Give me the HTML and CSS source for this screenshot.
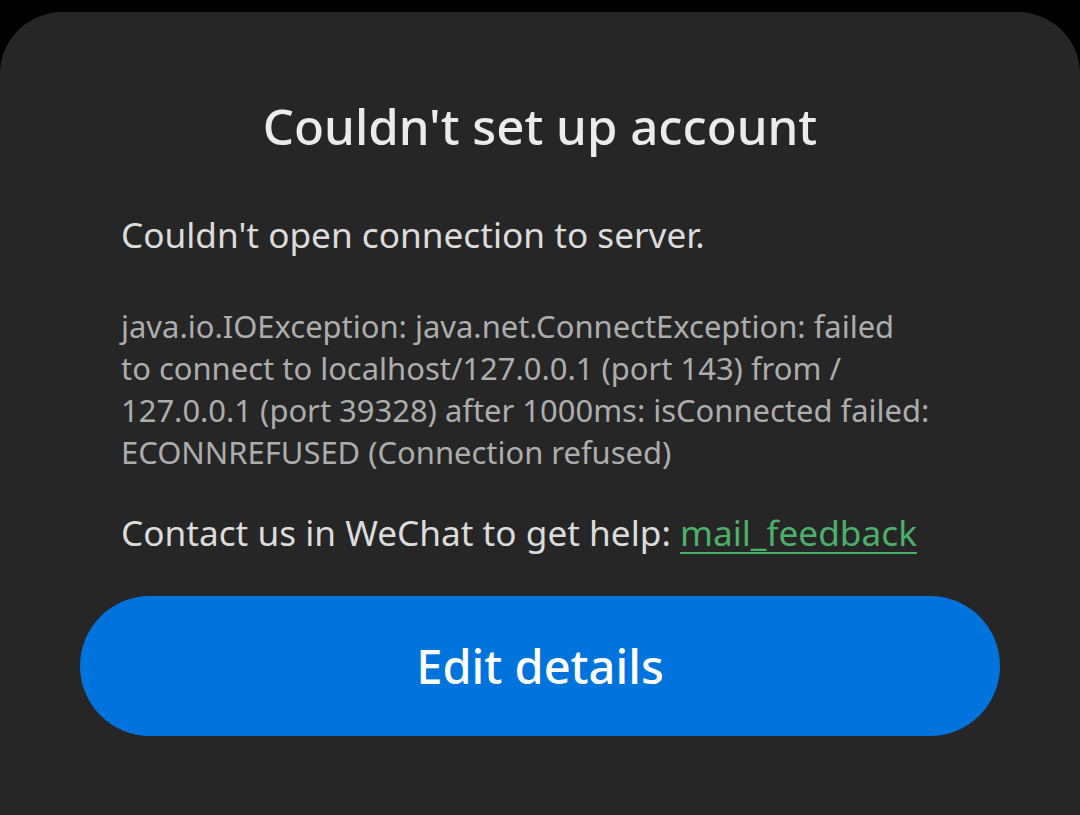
FILE: index.html
```html
<!DOCTYPE html>
<html>
<head>
<meta charset="utf-8">
<link rel="stylesheet" href="styles.css">
</head>
<body>
<div class="sheet">
  <h1 class="title">Couldn't set up account</h1>
  <div class="content">
    <p class="lead">Couldn't open connection to server.</p>
    <p class="details">java.io.IOException: java.net.ConnectException: failed<br>to connect to localhost/127.0.0.1 (port 143) from /<br>127.0.0.1 (port 39328) after 1000ms: isConnected failed:<br>ECONNREFUSED (Connection refused)</p>
    <p class="contact">Contact us in WeChat to get help: <a class="link" href="#">mail_feedback</a></p>
  </div>
  <div class="actions">
    <button class="primary">Edit details</button>
  </div>
</div>
</body>
</html>
```
FILE: styles.css
```css
html, body {
  margin: 0;
  padding: 0;
  background: #000;
  height: 100%;
  overflow: hidden;
}
body {
  font-family: "Noto Sans", "Open Sans", sans-serif;
}
.sheet {
  margin-top: 12px;
  height: 803px;
  background: #262626;
  border-radius: 62px 62px 0 0;
  display: flex;
  flex-direction: column;
  padding-top: 91px;
  box-sizing: border-box;
}
.title {
  margin: 0;
  text-align: center;
  font-size: 49.2px;
  line-height: 46px;
  font-weight: 500;
  color: #ebebeb;
}
.content {
  padding: 0 100px 0 121px;
}
.lead {
  margin: 62px 0 0;
  font-size: 35.2px;
  line-height: 46px;
  font-weight: 400;
  color: #dcdcdc;
  white-space: nowrap;
}
.details {
  margin: 48px 0 0;
  font-size: 30.95px;
  line-height: 42px;
  font-weight: 400;
  color: #adadad;
  white-space: nowrap;
}
.contact {
  margin: 36px 0 0;
  font-size: 35.2px;
  line-height: 46px;
  font-weight: 400;
  color: #dcdcdc;
  white-space: nowrap;
}
.link {
  color: #4cb06a;
  text-decoration: underline;
  text-underline-offset: 6px;
  text-decoration-thickness: 2px;
}
.actions {
  padding: 41px 80px 0;
}
.primary {
  width: 100%;
  height: 140px;
  border: none;
  border-radius: 70px;
  background: #0073dc;
  color: #fff;
  font-family: inherit;
  font-size: 47px;
  font-weight: 500;
}
```
